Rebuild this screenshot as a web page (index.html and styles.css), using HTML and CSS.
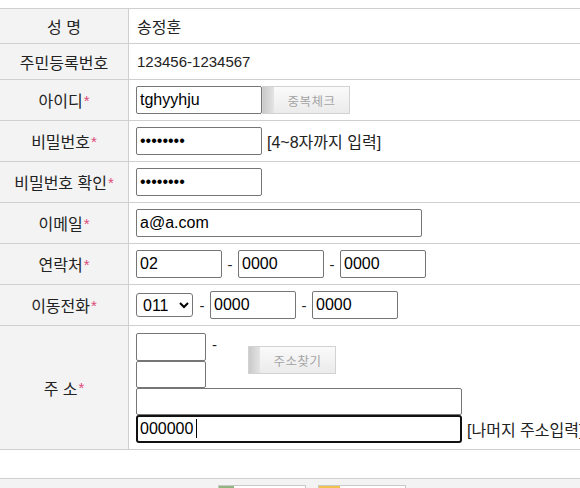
FILE: index.html
```html
<!DOCTYPE html>
<html lang="ko">
<head>
<meta charset="utf-8">
<title>회원정보</title>
<link rel="stylesheet" href="styles.css">
</head>
<body>
<div class="form">
  <div class="row h35">
    <div class="label">성 명</div>
    <div class="value text ko">송정훈</div>
  </div>
  <div class="row h36">
    <div class="label">주민등록번호</div>
    <div class="value text">123456-1234567</div>
  </div>
  <div class="row h41">
    <div class="label">아이디<span class="req">*</span></div>
    <div class="value">
      <input class="inp w126" type="text" value="tghyyhju">
      <span class="img-btn"><span class="strip"></span><span class="btn-txt">중복체크</span></span>
    </div>
  </div>
  <div class="row h41">
    <div class="label">비밀번호<span class="req">*</span></div>
    <div class="value">
      <input class="inp w126" type="password" value="12345678">
      <span class="hint">[4~8자까지 입력]</span>
    </div>
  </div>
  <div class="row h41">
    <div class="label">비밀번호 확인<span class="req">*</span></div>
    <div class="value">
      <input class="inp w126" type="password" value="12345678">
    </div>
  </div>
  <div class="row h41">
    <div class="label">이메일<span class="req">*</span></div>
    <div class="value">
      <input class="inp w286" type="text" value="a@a.com">
    </div>
  </div>
  <div class="row h41">
    <div class="label">연락처<span class="req">*</span></div>
    <div class="value">
      <input class="inp w86" type="text" value="02">
      <span class="dash">-</span>
      <input class="inp w86" type="text" value="0000">
      <span class="dash">-</span>
      <input class="inp w86" type="text" value="0000">
    </div>
  </div>
  <div class="row h41">
    <div class="label">이동전화<span class="req">*</span></div>
    <div class="value">
      <select class="sel">
        <option>011</option>
        <option>010</option>
      </select>
      <span class="dash">-</span>
      <input class="inp w86" type="text" value="0000">
      <span class="dash">-</span>
      <input class="inp w86" type="text" value="0000">
    </div>
  </div>
  <div class="row h124">
    <div class="label">주 소<span class="req">*</span></div>
    <div class="value addr">
      <div class="zip-line">
        <div class="zip-col">
          <input class="inp w70 h28" type="text" value="">
          <input class="inp w70 h27" type="text" value="">
        </div>
        <span class="zip-dash">-</span>
        <span class="img-btn find"><span class="strip"></span><span class="btn-txt">주소찾기</span></span>
      </div>
      <input class="inp w326 h27" type="text" value="">
      <div class="addr2">
        <span class="caret-wrap">
          <input class="inp w326 h28 focused" type="text" value="000000">
          <span class="caret"></span>
        </span>
        <span class="hint">[나머지 주소입력]</span>
      </div>
    </div>
  </div>
  <div class="row h29 blank"></div>
  <div class="actions">
    <span class="act-btn"><span class="act-strip green"></span></span>
    <span class="act-btn"><span class="act-strip orange"></span></span>
  </div>
</div>
</body>
</html>
```

FILE: styles.css
```css
html, body {
  margin: 0;
  padding: 0;
  background: #fff;
  overflow: hidden;
}
body {
  padding-top: 8px;
  font-family: "Liberation Sans", "Noto Sans CJK KR", sans-serif;
  font-size: 15px;
  color: #222;
}
.form {
  width: 624px;
  border-top: 1px solid #cfcfcf;
}
.row {
  display: flex;
  border-bottom: 1px solid #cfcfcf;
  box-sizing: border-box;
}
.h35 { height: 35px; }
.h36 { height: 36px; }
.h41 { height: 41px; }
.h124 { height: 124px; }
.h29 { height: 29px; }
.label {
  width: 128px;
  flex: none;
  border-right: 1px solid #cfcfcf;
  background: #f3f3f3;
  display: flex;
  align-items: center;
  justify-content: center;
  white-space: pre;
  color: #222;
  font-size: 16px;
}
.req {
  color: #de4a78;
  font-size: 15px;
  margin-left: 1px;
}
.value {
  flex: 1;
  display: flex;
  align-items: center;
  padding-left: 7px;
  white-space: nowrap;
}
.value.text {
  padding-left: 8px;
}
.ko {
  font-size: 16px;
}
.inp {
  box-sizing: border-box;
  height: 28px;
  border: 1px solid #767676;
  border-radius: 2px;
  padding: 0 3px;
  margin: 0;
  font-family: "Liberation Sans", "Noto Sans CJK KR", sans-serif;
  font-size: 16px;
  color: #000;
  background: #fff;
  outline: none;
}
.w126 { width: 126px; }
.w286 { width: 286px; }
.w86 { width: 86px; }
.w70 { width: 70px; }
.w326 { width: 326px; }
.h28 { height: 28px; }
.h27 { height: 27px; }
.dash {
  width: 16px;
  text-align: center;
  flex: none;
  font-size: 15px;
}
.hint {
  margin-left: 5px;
  color: #222;
  font-size: 16px;
}
.sel {
  width: 57px;
  height: 24px;
  font-family: "Liberation Sans", sans-serif;
  font-size: 16px;
  color: #000;
  border: 1px solid #767676;
  border-radius: 3px;
  background: #fff;
  padding: 0 0 0 2px;
  margin: 0 1px 0 0;
}
.img-btn {
  display: flex;
  width: 88px;
  height: 28px;
  box-sizing: border-box;
  border: 1px solid #d2d2d2;
  background: linear-gradient(#fafafa, #ebebeb);
}
.strip {
  width: 11px;
  flex: none;
  background: linear-gradient(90deg, #c9c9c9, #e4e4e4);
}
.btn-txt {
  flex: 1;
  display: flex;
  align-items: center;
  justify-content: center;
  font-family: "Noto Sans CJK KR", sans-serif;
  font-size: 12.5px;
  color: #a4a4a4;
  letter-spacing: 0.5px;
}
.addr {
  flex-direction: column;
  align-items: flex-start;
  justify-content: center;
}
.zip-line {
  display: flex;
  align-items: center;
}
.zip-col {
  display: flex;
  flex-direction: column;
}
.zip-dash {
  align-self: flex-start;
  margin: 3px 0 0 6px;
  font-size: 15px;
}
.find {
  margin-left: 31px;
}
.addr2 {
  display: flex;
  align-items: center;
}
.caret-wrap {
  position: relative;
  display: flex;
}
.focused {
  border: 2px solid #111;
  border-radius: 3px;
  padding: 0 2px;
}
.caret {
  position: absolute;
  left: 60px;
  top: 4px;
  width: 1px;
  height: 19px;
  background: #000;
}
.blank {
  background: #fff;
}
.actions {
  background: #f3f3f3;
  height: 40px;
  display: flex;
  justify-content: center;
  gap: 12px;
  padding-top: 6px;
}
.act-btn {
  display: flex;
  width: 88px;
  height: 28px;
  box-sizing: border-box;
  border: 1px solid #c9c9c9;
  background: linear-gradient(#ffffff, #f1f1f1);
}
.act-strip {
  flex: none;
}
.act-strip.green {
  width: 15px;
  background: #8fb67c;
}
.act-strip.orange {
  width: 21px;
  background: #f2c24f;
}
```
